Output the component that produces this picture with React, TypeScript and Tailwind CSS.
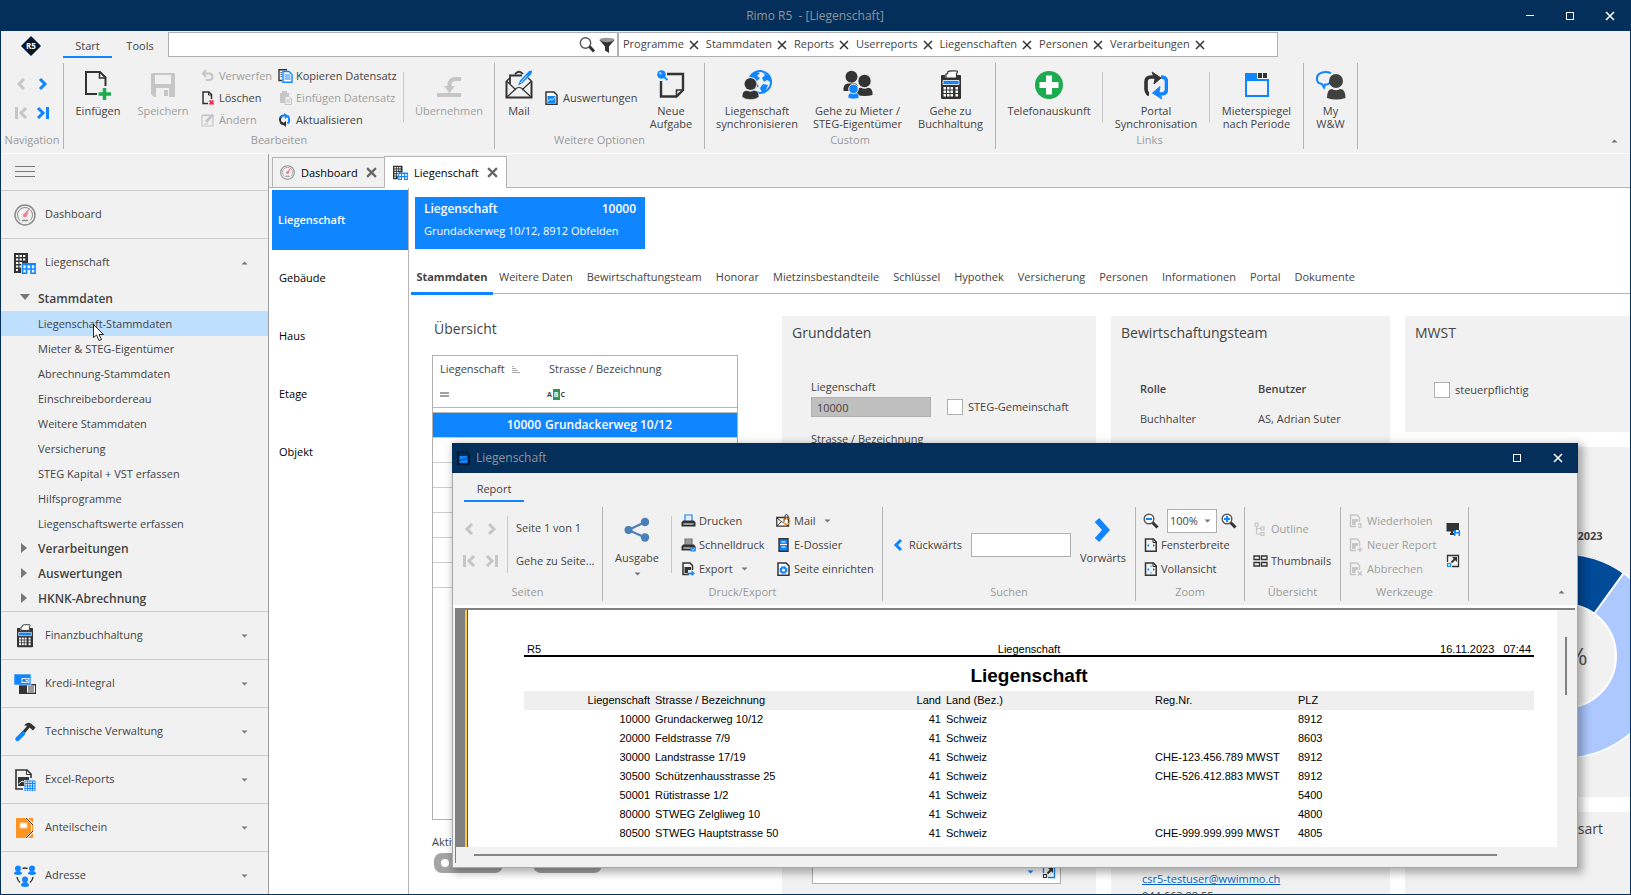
import { useState } from 'react';
import type { ReactNode } from 'react';

// ---------- Icons ----------

const DARK = '#333333';
const BLUE = '#0f85ff';
const MUTED = '#c6c6c6';

function Svg({ w, h, children }: { w: number; h: number; children: ReactNode }) {
  return (
    <svg width={w} height={h} viewBox={`0 0 ${w} ${h}`} fill="none" className="shrink-0" aria-hidden="true">
      {children}
    </svg>
  );
}

function Chevron({ dir, color, bar, big }: { dir: 'left' | 'right'; color: string; bar?: boolean; big?: boolean }) {
  if (big) {
    return (
      <Svg w={18} h={28}>
        <path d="M3 3 L12 13 L3 23" stroke={color} strokeWidth="6" />
      </Svg>
    );
  }
  return (
    <Svg w={14} h={14}>
      <g transform={dir === 'left' ? 'matrix(-1 0 0 1 14 0)' : undefined}>
        <path d={bar ? 'M2 2 L7 7 L2 12' : 'M4 2 L9 7 L4 12'} stroke={color} strokeWidth="3" />
        {bar && <path d="M11.5 1 V13" stroke={color} strokeWidth="3" />}
      </g>
    </Svg>
  );
}

function Caret({ up, color = '#777777' }: { up?: boolean; color?: string }) {
  return (
    <Svg w={7} h={4}>
      <path d={up ? 'M0.5 3.5 L3.5 0.5 L6.5 3.5 Z' : 'M0.5 0.5 L6.5 0.5 L3.5 3.5 Z'} fill={color} />
    </Svg>
  );
}

function CloseIcon({ size = 10, color = DARK, width = 1.4 }: { size?: number; color?: string; width?: number }) {
  return (
    <svg width={size} height={size} viewBox="0 0 10 10" className="shrink-0" aria-hidden="true">
      <path d="M1 1 L9 9 M9 1 L1 9" stroke={color} strokeWidth={width} />
    </svg>
  );
}

const LogoIcon = () => (
  <Svg w={20} h={20}>
    <path d="M10 1 L19 10 L10 19 L1 10 Z" fill="#03182f" stroke="#03182f" strokeWidth="1.5" strokeLinejoin="round" />
    <text x="10" y="13" textAnchor="middle" fontFamily="Open Sans, sans-serif" fontWeight="700" fontSize="8" fill="#fff">R5</text>
  </Svg>
);

const NewDocIcon = () => (
  <Svg w={28} h={30}>
    <path d="M13 24 H2 V2 H16 L21.500 7.500 V16" stroke={DARK} strokeWidth="2" />
    <path d="M15.500 2 V8 H21.500" stroke={DARK} strokeWidth="1.500" />
    <path d="M20.500 18 V30 M14.500 24 H27" stroke="#1dab50" strokeWidth="3.500" />
  </Svg>
);

const SaveIcon = () => (
  <Svg w={24} h={30}>
    <path d="M1 3 H23 Q24 3 24 4 V26 Q24 27 23 27 H3 L0 24 V4 Q0 3 1 3 Z" fill={MUTED} />
    <path d="M4 5 H20 V14 H4 Z M5 18 H18 V27 H5 Z" fill="#f1f1f1" />
    <path d="M4 3 H20 V5 H4 Z M13 20 H17 V26 H13 Z" fill={MUTED} />
  </Svg>
);

const UndoIcon = () => (
  <Svg w={14} h={14}>
    <path d="M5 1 L2 4.500 L5 8 M2 4.500 H8.500 Q11.500 4.500 11.500 8 Q11.500 11 8 11 H5" stroke={MUTED} strokeWidth="2" />
  </Svg>
);

const DeleteIcon = () => (
  <Svg w={14} h={14}>
    <path d="M7 12.500 H2 V1 H8 L10.500 3.500 V8" stroke={DARK} strokeWidth="1.500" />
    <path d="M7.500 1 V4 H10.500" stroke={DARK} />
    <path d="M8.500 9.500 L12.500 13.500 M12.500 9.500 L8.500 13.500" stroke="#ee3344" strokeWidth="1.800" />
  </Svg>
);

const EditIcon = () => (
  <Svg w={14} h={14}>
    <path d="M1 2.500 H12 V13 H1 Z" stroke={MUTED} strokeWidth="1.200" />
    <path d="M2 1 V3 M4 1 V3 M6 1 V3 M8 1 V3 M3 11 H7" stroke={MUTED} strokeWidth="1.200" />
    <path d="M5 9 L12 1.500" stroke={MUTED} strokeWidth="3" />
  </Svg>
);

const CopyIcon = () => (
  <Svg w={15} h={14}>
    <path d="M4 11.500 H1 V0.800 H9" stroke={DARK} strokeWidth="1.400" />
    <path d="M2.500 3.500 H4 M2.500 5.500 H4 M2.500 7.500 H4" stroke={DARK} strokeWidth="0.800" />
    <path d="M5 2.500 H11 L14 5.500 V13.200 H5 Z" fill="#fff" stroke={BLUE} strokeWidth="1.400" />
    <path d="M6.500 6 H12 M6.500 8 H12.500 M6.500 10 H12.500" stroke={BLUE} />
  </Svg>
);

const PasteIcon = () => (
  <Svg w={15} h={14}>
    <path d="M2 2 H11 V12 H2 Z M4 0 H9 V3 H4 Z" fill={MUTED} />
    <path d="M7 5.500 H11 L13.500 8 V13.500 H7 Z" fill="#eee" stroke={MUTED} />
    <path d="M8.500 9 H12 M8.500 11 H12" stroke={MUTED} />
  </Svg>
);

const RefreshIcon = () => (
  <Svg w={15} h={14}>
    <path d="M4.500 2.500 Q1.800 4 2 7 Q2.200 9.500 4.500 11" stroke={DARK} strokeWidth="2" />
    <path d="M9.500 2.800 Q11.500 4.500 11.200 7.500 Q11 9.500 9.500 10.500" stroke={BLUE} strokeWidth="2" />
    <path d="M3 4.500 Q4 2 7 2.200 H8" stroke={BLUE} strokeWidth="2" />
    <path d="M6 0 L10.500 3 L7 6 Z" fill={BLUE} />
    <path d="M3 9.500 Q4.500 11.500 8 11 " stroke={DARK} strokeWidth="2.400" />
    <path d="M8 8 L4.500 11 L8 14 Z" fill={DARK} />
  </Svg>
);

const ApplyIcon = () => (
  <Svg w={24} h={30}>
    <path d="M24 9 H19 Q12.500 9 12.500 15 V19" stroke={MUTED} strokeWidth="4" />
    <path d="M7 16 L12.500 23 L18 16 Z" fill={MUTED} />
    <path d="M0 25 H24" stroke={MUTED} strokeWidth="4" />
  </Svg>
);

const MailBigIcon = () => (
  <Svg w={28} h={30}>
    <path d="M1.500 11 V27.500 H26.500 V11" stroke={DARK} strokeWidth="2" />
    <path d="M1.500 11 L11 20 M26.500 11 L17 20 M2 27 L11 18.500 Q14 16.500 17 18.500 L26 27" stroke={DARK} strokeWidth="1.200" />
    <path d="M1.500 11 L5 8 M26.500 11 L23 8" stroke={DARK} strokeWidth="1.500" />
    <path d="M5 14 V5.500 H17 M10 4 Q14 -0.500 18 4" stroke={DARK} strokeWidth="1.800" />
    <path d="M13 15.500 L15 10.500 L24 1 L27 0.500 L26.500 4 L17.500 13 Z" fill={BLUE} />
    <path d="M15.500 13 L22 5.500" stroke="#fff" strokeWidth="0.800" />
  </Svg>
);

function ReportIcon({ color = DARK, page = '#ffffff' }: { color?: string; page?: string }) {
  return (
    <Svg w={13} h={14}>
      <path d="M1 1 H9 L12 4 V13.200 H1 Z" fill={page} stroke={color} strokeWidth="1.500" />
      <path d="M2.500 5 H10.500 V12 H2.500 Z" fill={BLUE} />
      <path d="M3 10 L5.500 8 L7 9 L10.500 6" stroke={page} strokeWidth="0.900" />
    </Svg>
  );
}

const TaskIcon = () => (
  <Svg w={28} h={30}>
    <path d="M10 4 H26 V20 L19.500 26.500 H4 V11" stroke={DARK} strokeWidth="2.400" />
    <path d="M19.500 26.500 V20 H26" stroke={DARK} strokeWidth="1.600" />
    <circle cx="4.500" cy="4.500" r="4.300" fill={BLUE} />
    <path d="M6 6 L10.500 10" stroke={BLUE} strokeWidth="1.800" />
    <circle cx="3.300" cy="3.300" r="1.200" fill="#a8d0ff" />
  </Svg>
);

const GlobeUserIcon = () => (
  <Svg w={30} h={30}>
    <circle cx="18" cy="12" r="11" stroke={BLUE} strokeWidth="2" />
    <path d="M9 5 L14 2 L18 3 L15 6 L18 8 L14 12 L17 16 L12 20 L8 12 Z M20 2 L27 6 L29 12 L25 10 L22 12 L20 8 L23 5 Z M21 14 L26 15 L24 20 L20 23 L18 18 Z" fill={BLUE} />
    <circle cx="8.500" cy="14" r="7" fill="#f1f1f1" />
    <circle cx="8.500" cy="14" r="6" fill={DARK} />
    <path d="M0 27 Q0 20 5 20.500 Q8.500 22 12 20.500 Q17 20 17 27 Q13 30 8.500 29.500 Q4 30 0 27 Z" fill={DARK} stroke="#f1f1f1" strokeWidth="0.600" />
  </Svg>
);

const PeopleIcon = () => (
  <Svg w={30} h={30}>
    <circle cx="8.500" cy="6.800" r="6" fill={DARK} />
    <path d="M0.500 21 Q0 13.500 5 13.500 H13 Q15 14 14.500 21 Z" fill={DARK} />
    <circle cx="21.500" cy="11" r="6.700" fill={DARK} stroke="#f1f1f1" />
    <path d="M14 25 Q13.500 17.500 18 17.800 Q21.500 19.500 25 17.800 Q30 18 29.500 25 Q22 27 14 25 Z" fill={DARK} />
    <circle cx="10.500" cy="19" r="4.800" fill={BLUE} stroke="#f1f1f1" />
    <path d="M5 28 Q5 23 8 23 Q10.500 25 13 23 Q16 23 16 28 Q10.500 30 5 28 Z" fill={BLUE} stroke="#f1f1f1" strokeWidth="0.600" />
  </Svg>
);

function CalcIcon({ w = 22, h = 30 }: { w?: number; h?: number }) {
  return (
    <svg width={w} height={h} viewBox="0 0 22 30" fill="none" className="shrink-0" aria-hidden="true">
      <path d="M6 8 V4 Q8 4 8 1.500 Q9 0.500 17 1 Q18 2 16.500 3.500 V8 Z" fill="#fff" stroke={DARK} strokeWidth="1.200" />
      <path d="M2 5 H5 V8 H17 V5 H20 Q21 5 21 6 V28 Q21 29 20 29 H2 Q1 29 1 28 V6 Q1 5 2 5 Z" fill={DARK} />
      <path d="M3 10.500 H19 V14.500 H3 Z" fill={BLUE} stroke="#fff" strokeWidth="0.800" />
      {[17, 20.5, 24].map((y) =>
        [3.5, 7, 10.500, 15.500].map((x) => <rect key={`${x}-${y}`} x={x} y={y} width="2.500" height="2.500" fill="#fff" />)
      )}
    </svg>
  );
}

const PlusCircleIcon = () => (
  <Svg w={28} h={30}>
    <circle cx="14" cy="15" r="14" fill="#1dab50" />
    <path d="M14 5.500 V24.500 M4.500 15 H23.500" stroke="#fff" strokeWidth="6" />
  </Svg>
);

const SyncIcon = () => (
  <Svg w={24} h={30}>
    <path d="M5 24 H4 Q2 22 2 19 V12 Q2 7 7 7 H11" stroke={DARK} strokeWidth="3.600" />
    <path d="M8 2 L17 8 L10 14 L11 9 Z" fill={DARK} stroke={DARK} />
    <path d="M17 7 Q22.500 7 22.500 12 V19 Q22.500 24 17 24 H14" stroke={BLUE} strokeWidth="3.600" />
    <path d="M18 29 L8.500 23 L16 16.500 L15 22 Z" fill={BLUE} stroke={BLUE} />
  </Svg>
);

const FolderTabsIcon = () => (
  <Svg w={24} h={30}>
    <path d="M1 26 V4 H11 V10 H23 V26 Z" fill="#f4f4f4" stroke={BLUE} strokeWidth="2" />
    <path d="M0 4 Q0 3 1 3 H11 V11 H0 Z" fill={BLUE} />
    <path d="M0 9 H24 V11 H0 Z" fill={BLUE} />
    <path d="M13 3 H17 V8 H13 Z M18 3 H22 V8 H18 Z" fill={DARK} />
  </Svg>
);

const ChatUserIcon = () => (
  <Svg w={30} h={30}>
    <path d="M15 3 Q8 0.500 3 4 Q-1 8 2.500 13 L6 14 L8 17.500 L9 14.500 Q13 15 14 12" stroke={BLUE} strokeWidth="2" />
    <circle cx="20" cy="11" r="7" fill="#404040" />
    <path d="M11 28 Q11 19 16 19 Q20 21.500 24 19 Q29.500 19 29.500 28 Q20 31 11 28 Z" fill="#404040" />
  </Svg>
);

const GaugeIcon = ({ size = 22 }: { size?: number }) => (
  <svg width={size} height={size} viewBox="0 0 22 22" fill="none" className="shrink-0" aria-hidden="true">
    <circle cx="11" cy="11" r="10" stroke="#8c8c8c" strokeWidth="1.500" />
    <circle cx="11" cy="11" r="7.500" stroke="#8c8c8c" strokeWidth="1" strokeDasharray="36 11" strokeDashoffset="-17" />
    <path d="M15.500 4 L13 12 Q11 14.500 9 12 Q8.500 10 11 9 Z" fill="#ee7d90" />
    <path d="M8 16.500 H14" stroke="#8c8c8c" strokeWidth="1.500" />
  </svg>
);

const BuildingIcon = ({ size = 22 }: { size?: number }) => (
  <svg width={size} height={size} viewBox="0 0 22 22" fill="none" className="shrink-0" aria-hidden="true">
    <path d="M0 1 H14 V11 H7 V21 H0 Z" fill={DARK} />
    {[3, 6.5, 10, 13.500].map((y) =>
      [2, 5.500, 9].map((x) => (x > 7 && y > 9 ? null : <rect key={`${x}-${y}`} x={x} y={y} width="2.300" height="2" fill="#fff" />))
    )}
    <path d="M2 17 H4 V19 H2 Z" fill="#fff" />
    <path d="M8.500 12.500 H21 V22 M8.500 12 V22 M8 17 H21.500 M12.500 12 V22 M17 12 V22" stroke={BLUE} strokeWidth="1.600" />
    <path d="M8 11 H22 V13 H8 Z M8 20.500 H12 V22 H8 Z M17 20.500 H22 V22 H17 Z" fill={BLUE} />
  </svg>
);

const CreditIcon = () => (
  <Svg w={22} h={22}>
    <path d="M5 11 H22 V21 H5 Z" fill={DARK} />
    <path d="M13 12.500 H21 V19.500 H13 Z" fill="#fff" />
    <path d="M14 14 H20 M14 16 H20 M14 18 H20" stroke={DARK} />
    <path d="M0 1 H17 V12 H0 Z" fill={BLUE} stroke="#f1f1f1" strokeWidth="0.600" />
    <path d="M7.500 5 H15.500 V10 H7.500 Z" fill="#fff" />
    <circle cx="10" cy="7.500" r="1.800" fill={BLUE} />
    <circle cx="13" cy="7.500" r="1.500" stroke={BLUE} />
  </Svg>
);

const HammerIcon = () => (
  <Svg w={22} h={22}>
    <path d="M9 12 L15 5" stroke={DARK} strokeWidth="3" />
    <path d="M10 4.500 Q13 0.500 17 2.500 L21.500 6.500 L19 9.500 L15 6 Q13 4 10 4.500 Z" fill={DARK} />
    <path d="M3.500 18 L9 12.500" stroke={BLUE} strokeWidth="4.500" strokeLinecap="round" />
  </Svg>
);

const ExcelIcon = () => (
  <Svg w={22} h={22}>
    <path d="M9 20 H2 V1 H13 L17 5 V9" stroke={DARK} strokeWidth="1.600" />
    <path d="M12.500 1 V5.500 H17" stroke={DARK} />
    <path d="M4 8 H15 V11 H10 V17 H4 Z" fill={DARK} />
    <path d="M4.500 15 L8 12 L10 13" stroke="#fff" />
    <path d="M11 12 H21 V22 H11 Z" fill="#fff" stroke={BLUE} />
    <path d="M11 14.500 H21 M11 17 H21 M11 19.500 H21 M13.500 12 V22 M16 12 V22 M18.500 12 V22" stroke={BLUE} />
  </Svg>
);

const CertificateIcon = () => (
  <Svg w={22} h={22}>
    <path d="M2 1 H11 L17 7 V15 L11 21 H2 Z" fill="#ff9423" />
    <path d="M14 1 H19 V6 Z M14 21 H19 V16 Z M18 8 H19 V14 H18 Z" fill="#ff9423" />
    <path d="M12 1 L19 8 M12 21 L19 14" stroke={DARK} strokeWidth="1" />
    <path d="M6 6 H13 V11 H6 Z" fill="#fff" stroke="#ffd09a" />
  </Svg>
);

const NetworkIcon = () => (
  <Svg w={22} h={22}>
    <circle cx="4" cy="3.500" r="3" fill={BLUE} />
    <path d="M0 9 Q0 6 4 6 Q8 6 8 9 Q4 11 0 9 Z" fill={BLUE} />
    <circle cx="18" cy="3.500" r="3" fill={BLUE} />
    <path d="M14 9 Q14 6 18 6 Q22 6 22 9 Q18 11 14 9 Z" fill={BLUE} />
    <circle cx="11" cy="14.500" r="3" fill={BLUE} />
    <path d="M7 21 Q7 17 11 17 Q15 17 15 21 Q11 23 7 21 Z" fill={BLUE} />
    <path d="M8.500 3.500 Q11 2.500 13.500 3.500 M3 12 Q3.500 15.500 6 17.500 M19 12 Q18.500 15.500 16 17.500" stroke={DARK} strokeWidth="1.400" />
  </Svg>
);

const ShareIcon = () => (
  <Svg w={26} h={30}>
    <path d="M4.500 13 L21 5 M4.500 13 L21 20.500" stroke="#4a7fb8" strokeWidth="2" />
    <circle cx="4.500" cy="13" r="4" fill="#4a7fb8" />
    <circle cx="21" cy="5" r="4.200" fill="#4a7fb8" />
    <circle cx="21" cy="20.500" r="4.200" fill="#4a7fb8" />
  </Svg>
);

function PrinterIcon({ quick }: { quick?: boolean }) {
  return (
    <Svg w={15} h={14}>
      <path d="M4 7 V1 H11 V7" fill={quick ? '#999' : '#e4f0ff'} stroke={quick ? '#777' : BLUE} strokeWidth="1.200" />
      <path d="M2 6.500 H13 L14.500 8.500 V12.500 H0.500 V8.500 Z" fill={DARK} />
      <path d="M2.500 10 H12.500" stroke="#fff" />
      {quick && <path d="M9.500 9 H14.500 V13.500 H9.500 Z" fill={BLUE} />}
      {quick && <path d="M10.500 11 L12 12.300 L13.500 10.500" stroke="#fff" strokeWidth="0.800" />}
    </Svg>
  );
}

const ExportIcon = () => (
  <Svg w={15} h={14}>
    <path d="M8 12.500 H2 V1 H9 L11.500 3.500 V8" stroke={DARK} strokeWidth="1.500" />
    <path d="M3.500 5 H10 V8 H7 V11 H3.500 Z" fill={DARK} />
    <path d="M6.500 11.500 H11" stroke={BLUE} strokeWidth="1.800" />
    <path d="M10.500 8.500 L14 11.500 L10.500 14 Z" fill={BLUE} />
  </Svg>
);

const MailSmallIcon = () => (
  <Svg w={15} h={14}>
    <path d="M0.800 3.500 H12.500 V12.200 H0.800 Z" fill="#fff" stroke={DARK} strokeWidth="1.300" />
    <path d="M1 4 L6.500 8.500 L9 6.500 M1 12 L5 8 M12 12 L9 9.500" stroke={DARK} />
    <circle cx="10.500" cy="7" r="3.200" stroke="#ff9423" strokeWidth="1.300" />
    <path d="M9 6 V1.500 Q10.500 -0.500 12 1.500 V6" stroke={DARK} />
  </Svg>
);

const DossierIcon = () => (
  <Svg w={15} h={14}>
    <path d="M3 0.800 H12 V13.200 H3 Z" fill={BLUE} stroke={DARK} strokeWidth="1.400" />
    <path d="M5.500 4 H9.500 M5.500 9 H9.500 M4 6.500 H11" stroke="#fff" strokeWidth="1.200" />
  </Svg>
);

const PageSetupIcon = () => (
  <Svg w={15} h={14}>
    <path d="M2 1 H10 L13 4 V13.200 H2 Z" fill="#fff" stroke={DARK} strokeWidth="1.500" />
    <circle cx="7.500" cy="8" r="2.600" stroke={BLUE} strokeWidth="2" />
    <circle cx="7.500" cy="8" r="3.800" stroke={BLUE} strokeWidth="0.800" strokeDasharray="1.500 1.500" />
  </Svg>
);

function PageFitIcon({ full }: { full?: boolean }) {
  return (
    <Svg w={14} h={14}>
      <path d="M2.500 1 H10.500 L13.200 4 V13.200 H2.500 Z" stroke={DARK} strokeWidth="1.500" />
      <path d="M10 1 V4.500 H13" stroke={DARK} />
      <path d="M6 6 L4 7.500 L6 9 Z M10 6 L12 7.500 L10 9 Z" fill={BLUE} />
      {full && <path d="M7 4.500 L8 3.200 L9 4.500 Z M7 10.500 L8 11.800 L9 10.500 Z" fill={BLUE} />}
    </Svg>
  );
}

function ZoomIcon({ plus }: { plus?: boolean }) {
  return (
    <Svg w={16} h={16}>
      <path d="M9.500 9.500 L14.500 14.500" stroke={DARK} strokeWidth="3" />
      <circle cx="6" cy="6" r="4.800" fill="#fff" stroke="#555" strokeWidth="1.400" />
      <path d={plus ? 'M3 6 H9 M6 3 V9' : 'M3 6 H9'} stroke={BLUE} strokeWidth="2" />
    </Svg>
  );
}

const OutlineIcon = () => (
  <Svg w={15} h={14}>
    <path d="M2 1 H5 V4 H2 Z M8 5 H11 V8 H8 Z M8 10.500 H11 V13.500 H8 Z M3.500 4 V12 H8 M3.500 6.500 H8" stroke={MUTED} strokeWidth="1.200" />
  </Svg>
);

const ThumbsIcon = () => (
  <Svg w={15} h={14}>
    <path d="M1 2 H6.500 V5.500 H1 Z M8.500 2 H14 V5.500 H8.500 Z M1 8.500 H6.500 V12 H1 Z M8.500 8.500 H14 V12 H8.500 Z" stroke={DARK} strokeWidth="1.300" />
  </Svg>
);

function MutedReportIcon({ mark }: { mark: string }) {
  return (
    <Svg w={14} h={14}>
      <path d="M7 12.500 H1.500 V1 H8 L10.500 3.500 V8" stroke={MUTED} strokeWidth="1.400" />
      <path d="M3 5 H9 V8 H6.500 V11 H3 Z" fill={MUTED} />
      <path d={mark} stroke={MUTED} strokeWidth="1.400" />
    </Svg>
  );
}

const MonitorIcon = () => (
  <Svg w={15} h={14}>
    <path d="M0.500 1 H13 V9.500 H0.500 Z" fill={DARK} />
    <path d="M4 12 H8 M6 9 V12" stroke={DARK} strokeWidth="2" />
    <path d="M8 8 H14 V14 H8 Z" fill={BLUE} />
    <path d="M10 8 H12.500 V10 H10 Z M9.500 11.500 H12.500 V14 H9.500 Z" fill="#fff" />
  </Svg>
);

function OpenIcon({ frame = DARK, corner = BLUE }: { frame?: string; corner?: string }) {
  return (
    <Svg w={14} h={14}>
      <path d="M6 12.500 H12.500 V1.500 H1.500 V8" stroke={frame} strokeWidth="1.300" />
      <path d="M5.500 8.500 L9 5" stroke={DARK} strokeWidth="2" />
      <path d="M6 3 H11 V8 Z" fill={DARK} />
      <path d="M1.500 9.500 H4.500 V12.500 H1.500 Z" stroke={corner} strokeWidth="1.200" />
    </Svg>
  );
}

const CursorIcon = () => (
  <Svg w={12} h={18}>
    <path d="M0.500 0.500 V13.500 L3.500 11 L6 16.500 L8.500 15.500 L6 10.500 H10.500 Z" fill="#fff" stroke="#111" strokeWidth="0.900" />
  </Svg>
);

// ---------- Ribbon parts ----------

function BigButton({ icon, lines, className = '', disabled }: { icon: ReactNode; lines: string[]; className?: string; disabled?: boolean }) {
  return (
    <button
      disabled={disabled}
      className={`flex flex-col items-center text-center leading-[13px] whitespace-nowrap ${disabled ? 'text-[#9f9f9f]' : ''} ${className}`}
    >
      <span className="flex h-[30px] items-start">{icon}</span>
      <span className="mt-1">
        {lines.map((line) => (
          <span key={line} className="block">{line}</span>
        ))}
      </span>
    </button>
  );
}

function SmallButton({ icon, label, disabled, caret, tall }: { icon: ReactNode; label: string; disabled?: boolean; caret?: boolean; tall?: boolean }) {
  return (
    <button
      disabled={disabled}
      className={`flex items-center whitespace-nowrap ${tall ? 'h-6' : 'h-[22px]'} ${disabled ? 'text-[#9f9f9f]' : ''}`}
    >
      <span className="flex w-[18px] shrink-0 items-center">{icon}</span>
      <span>{label}</span>
      {caret && <span className="ml-2"><Caret /></span>}
    </button>
  );
}

function Group({ label, className, children }: { label?: string; className: string; children: ReactNode }) {
  return (
    <section className={`flex shrink-0 flex-col border-r border-[#b4b4b4] ${className}`}>
      <div className="flex min-h-0 flex-1 items-start">{children}</div>
      {label && <div className="h-[17px] text-center leading-[15px] text-[#9a9a9a]">{label}</div>}
    </section>
  );
}

const Divider = ({ className }: { className: string }) => <div className={`w-px shrink-0 bg-[#c8c8c8] ${className}`} />;

// ---------- Data ----------

const searchTags = ['Programme', 'Stammdaten', 'Reports', 'Userreports', 'Liegenschaften', 'Personen', 'Verarbeitungen'];

const stammdatenItems = [
  'Liegenschaft-Stammdaten',
  'Mieter & STEG-Eigentümer',
  'Abrechnung-Stammdaten',
  'Einschreibebordereau',
  'Weitere Stammdaten',
  'Versicherung',
  'STEG Kapital + VST erfassen',
  'Hilfsprogramme',
  'Liegenschaftswerte erfassen',
];

const modules = [
  { label: 'Finanzbuchhaltung', icon: <CalcIcon w={22} h={24} /> },
  { label: 'Kredi-Integral', icon: <CreditIcon /> },
  { label: 'Technische Verwaltung', icon: <HammerIcon /> },
  { label: 'Excel-Reports', icon: <ExcelIcon /> },
  { label: 'Anteilschein', icon: <CertificateIcon /> },
  { label: 'Adresse', icon: <NetworkIcon /> },
];

const levels = ['Gebäude', 'Haus', 'Etage', 'Objekt'];

const detailTabs = [
  'Weitere Daten', 'Bewirtschaftungsteam', 'Honorar', 'Mietzinsbestandteile', 'Schlüssel', 'Hypothek',
  'Versicherung', 'Personen', 'Informationen', 'Portal', 'Dokumente',
];

const reportRows = [
  ['10000', 'Grundackerweg 10/12', '41', 'Schweiz', '', '8912'],
  ['20000', 'Feldstrasse 7/9', '41', 'Schweiz', '', '8603'],
  ['30000', 'Landstrasse 17/19', '41', 'Schweiz', 'CHE-123.456.789 MWST', '8912'],
  ['30500', 'Schützenhausstrasse 25', '41', 'Schweiz', 'CHE-526.412.883 MWST', '8912'],
  ['50001', 'Rütistrasse 1/2', '41', 'Schweiz', '', '5400'],
  ['80000', 'STWEG Zelgliweg 10', '41', 'Schweiz', '', '4800'],
  ['80500', 'STWEG Hauptstrasse 50', '41', 'Schweiz', 'CHE-999.999.999 MWST', '4805'],
];

// ---------- Main window ----------

function TitleBar() {
  return (
    <header className="flex h-[31px] shrink-0 items-center bg-[#042f5a] text-[12px] text-[#8e959c]">
      <div className="flex-1" />
      <h1 className="whitespace-pre">Rimo R5  - [Liegenschaft]</h1>
      <div className="flex flex-1 justify-end pr-px">
        <button aria-label="Minimieren" className="flex h-[31px] w-10 items-center justify-center">
          <span className="h-px w-2 bg-white" />
        </button>
        <button aria-label="Maximieren" className="flex h-[31px] w-10 items-center justify-center">
          <span className="h-2 w-2 border border-white" />
        </button>
        <button aria-label="Schliessen" className="flex h-[31px] w-10 items-center justify-center">
          <CloseIcon color="#ffffff" width={1.6} />
        </button>
      </div>
    </header>
  );
}

function Ribbon() {
  return (
    <div className="shrink-0 border-b border-white bg-[#f1f1f1]">
      <div className="flex h-[27px] items-start">
        <div className="flex w-[62px] shrink-0 justify-center pt-[5px] pr-[2px]"><LogoIcon /></div>
        <button className="h-[27px] w-[49px] border-b-2 border-[#0f85ff] pt-[5px]">Start</button>
        <button className="h-[27px] w-14 shrink-0 pt-1">Tools</button>
        <div className="mt-px flex h-[25px] w-[450px] shrink-0 items-center border border-[#b0b0b0] bg-white pr-[2px]">
          <input aria-label="Suche" className="h-full min-w-0 flex-1 px-2 outline-none" />
          <Svg w={36} h={18}>
            <circle cx="6.500" cy="7" r="5.200" stroke="#555" strokeWidth="1.400" />
            <path d="M10.500 10.500 L15 15.500" stroke={DARK} strokeWidth="3" />
            <ellipse cx="28" cy="4" rx="7.500" ry="2.300" fill="#999" />
            <path d="M20.500 4 Q28 8.500 35.500 4 L30 10.500 V17 L26 14.500 V10.500 Z" fill={DARK} />
          </Svg>
        </div>
        <div className="mt-px flex h-[25px] w-[660px] items-center gap-[7px] border border-[#b0b0b0] bg-white pl-1">
          {searchTags.map((tag) => (
            <span key={tag} className="flex items-center gap-[5px]">
              {tag}
              <button aria-label={`${tag} entfernen`}><CloseIcon width={1.5} /></button>
            </span>
          ))}
        </div>
      </div>

      <div className="flex h-[95px] items-start pt-[5px]">
        <Group label="Navigation" className="h-[86px] w-[63px]">
          <div className="grid w-full grid-cols-[22px_22px] justify-center gap-y-[15px] pt-[14px]">
            <button aria-label="Zurück" className="flex justify-center"><Chevron dir="left" color={MUTED} /></button>
            <button aria-label="Weiter" className="flex justify-center"><Chevron dir="right" color={BLUE} /></button>
            <button aria-label="Anfang" className="flex justify-center"><Chevron dir="left" color={MUTED} bar /></button>
            <button aria-label="Ende" className="flex justify-center"><Chevron dir="right" color={BLUE} bar /></button>
          </div>
        </Group>

        <Group label="Bearbeiten" className="h-[86px] w-[431px]">
          <BigButton icon={<NewDocIcon />} lines={['Einfügen']} className="ml-2 w-[52px] pt-[7px]" />
          <BigButton icon={<SaveIcon />} lines={['Speichern']} className="ml-[11px] w-14 pt-[7px]" disabled />
          <div className="ml-[10px] w-[77px] pt-[2px]">
            <SmallButton icon={<UndoIcon />} label="Verwerfen" disabled />
            <SmallButton icon={<DeleteIcon />} label="Löschen" />
            <SmallButton icon={<EditIcon />} label="Ändern" disabled />
          </div>
          <div className="w-[125px] pt-[2px]">
            <SmallButton icon={<CopyIcon />} label="Kopieren Datensatz" />
            <SmallButton icon={<PasteIcon />} label="Einfügen Datensatz" disabled />
            <SmallButton icon={<RefreshIcon />} label="Aktualisieren" />
          </div>
          <Divider className="mt-[9px] h-[50px]" />
          <BigButton icon={<ApplyIcon />} lines={['Übernehmen']} className="flex-1 pt-[7px]" disabled />
        </Group>

        <Group label="Weitere Optionen" className="h-[86px] w-[210px]">
          <BigButton icon={<MailBigIcon />} lines={['Mail']} className="w-12 pt-[7px]" />
          <div className="w-[95px] pt-6 pl-[2px]">
            <SmallButton icon={<ReportIcon />} label="Auswertungen" />
          </div>
          <BigButton icon={<TaskIcon />} lines={['Neue', 'Aufgabe']} className="flex-1 pt-[7px]" />
        </Group>

        <Group label="Custom" className="h-[86px] w-[291px]">
          <BigButton icon={<GlobeUserIcon />} lines={['Liegenschaft', 'synchronisieren']} className="w-[104px] pt-[7px]" />
          <BigButton icon={<PeopleIcon />} lines={['Gehe zu Mieter /', 'STEG-Eigentümer']} className="w-[97px] pt-[7px]" />
          <BigButton icon={<CalcIcon />} lines={['Gehe zu', 'Buchhaltung']} className="flex-1 pt-[7px]" />
        </Group>

        <Group label="Links" className="h-[86px] w-[308px]">
          <BigButton icon={<PlusCircleIcon />} lines={['Telefonauskunft']} className="w-[106px] pt-[7px]" />
          <Divider className="mt-[9px] h-[50px]" />
          <BigButton icon={<SyncIcon />} lines={['Portal', 'Synchronisation']} className="w-[106px] pt-[7px]" />
          <Divider className="mt-[9px] h-[50px]" />
          <BigButton icon={<FolderTabsIcon />} lines={['Mieterspiegel', 'nach Periode']} className="flex-1 pt-[7px]" />
        </Group>

        <Group className="h-[86px] w-[54px]">
          <BigButton icon={<ChatUserIcon />} lines={['My', 'W&W']} className="flex-1 pt-[7px]" />
        </Group>

        <button aria-label="Menüband einklappen" className="mt-[76px] mr-3 ml-auto"><Caret up /></button>
      </div>
    </div>
  );
}

function Sidebar() {
  const [active, setActive] = useState(stammdatenItems[0]);
  const line = 'border-b border-[#cccccc]';

  return (
    <nav className="w-[268px] shrink-0 overflow-hidden border-r border-[#a0a0a0] bg-[#f1f1f1]">
      <div className={`flex h-[37px] items-center pl-[14px] ${line}`}>
        <button aria-label="Menü" className="flex w-5 flex-col gap-1 pb-[2px]">
          <span className="h-px bg-[#777777]" />
          <span className="h-px bg-[#777777]" />
          <span className="h-px bg-[#777777]" />
        </button>
      </div>
      <button className={`flex h-12 w-full items-center gap-[9px] pl-[13px] ${line}`}>
        <GaugeIcon />
        Dashboard
      </button>
      <button className="flex h-[47px] w-full items-center gap-[9px] pr-5 pl-[13px]">
        <BuildingIcon />
        <span className="flex-1 text-left">Liegenschaft</span>
        <Caret up />
      </button>
      <button className="flex h-[25px] w-full items-center pl-[19px] text-[12px] font-semibold">
        <span className="w-[18px]"><Svg w={10} h={10}><path d="M0 0 H10 L5 6 Z" fill="#777" /></Svg></span>
        Stammdaten
      </button>
      <ul>
        {stammdatenItems.map((item) => (
          <li key={item}>
            <a
              href="#"
              onClick={() => setActive(item)}
              className={`relative block h-[25px] pl-[37px] leading-[25px] ${active === item ? 'bg-[#bfdfff]' : ''}`}
            >
              {item}
              {active === item && <span className="absolute top-[13px] left-[92px]"><CursorIcon /></span>}
            </a>
          </li>
        ))}
      </ul>
      <div className={`h-[76px] ${line}`}>
        {['Verarbeitungen', 'Auswertungen', 'HKNK-Abrechnung'].map((item) => (
          <button key={item} className="flex h-[25px] w-full items-center pl-5 text-[12px] font-semibold">
            <span className="w-[17px]"><Svg w={6} h={12}><path d="M0 0 L6 5 L0 10 Z" fill="#777" /></Svg></span>
            {item}
          </button>
        ))}
      </div>
      {modules.map(({ label, icon }) => (
        <button key={label} className={`flex h-12 w-full items-center gap-[9px] pr-5 pl-[13px] ${line}`}>
          {icon}
          <span className="flex-1 text-left">{label}</span>
          <Caret />
        </button>
      ))}
    </nav>
  );
}

function DocumentTabs() {
  return (
    <div className="flex h-[34px] shrink-0 items-end bg-[#f1f1f1] text-black">
      <div className="h-px w-[3px] bg-[#b4b4b4]" />
      <div className="flex h-[31px] w-[112px] items-center border border-r-0 border-[#b4b4b4] pl-[7px]">
        <GaugeIcon size={15} />
        <button className="ml-[6px] pt-px">Dashboard</button>
        <button aria-label="Dashboard schliessen" className="ml-2"><CloseIcon size={11} color="#666" width={2} /></button>
      </div>
      <div className="flex h-8 w-[123px] items-center border-x border-t border-[#b4b4b4] bg-white pl-2">
        <BuildingIcon size={15} />
        <button className="ml-[6px] pt-px">Liegenschaft</button>
        <button aria-label="Liegenschaft schliessen" className="ml-2"><CloseIcon size={11} color="#666" width={2} /></button>
      </div>
      <div className="h-px flex-1 bg-[#b4b4b4]" />
    </div>
  );
}

function LevelNav() {
  return (
    <nav className="w-[140px] shrink-0 border-r border-[#b4b4b4] pt-[2px] pl-[3px] text-black">
      <button className="block h-[60px] w-full bg-[#0f85ff] pl-[6px] text-left font-semibold text-white">Liegenschaft</button>
      {levels.map((level) => (
        <button key={level} className="block h-[58px] w-full pb-[2px] pl-[7px] text-left">{level}</button>
      ))}
    </nav>
  );
}

function Overview() {
  return (
    <section className="w-[306px] shrink-0">
      <h2 className="pt-[3px] pl-[2px] text-[14px] leading-5">Übersicht</h2>
      <div className="mt-4 h-[465px] border border-[#b0b0b0]">
        <table className="w-full table-fixed border-separate border-spacing-0">
          <colgroup>
            <col className="w-[108px]" />
            <col />
          </colgroup>
          <thead>
            <tr className="h-[26px] text-left">
              <th className="pl-[7px] font-normal">
                <span className="flex items-center gap-[7px]">
                  Liegenschaft
                  <Svg w={9} h={8}>
                    <path d="M0 1.500 H2 M0 3.500 H4 M0 5.500 H6 M0 7.500 H8" stroke="#aaa" />
                  </Svg>
                </span>
              </th>
              <th className="pl-2 font-normal">Strasse / Bezeichnung</th>
            </tr>
            <tr className="h-[25px]">
              <td className="pl-[7px]">
                <Svg w={9} h={5}><path d="M0 1 H9 M0 4 H9" stroke="#444" /></Svg>
              </td>
              <td className="pl-[6px]">
                <span className="flex items-center text-[7px] leading-[11px] font-bold">
                  A<span className="mx-px bg-[#2f9656] px-px text-white">B</span>C
                </span>
              </td>
            </tr>
          </thead>
          <tbody>
            <tr>
              <td colSpan={2} className="h-[6px] border-y border-[#b8b8b8] p-0" />
            </tr>
            <tr className="bg-[#0f85ff] text-[12px] font-semibold text-white">
              <td className="h-[25px] border-b border-[#cccccc] text-right">10000</td>
              <td className="border-b border-[#cccccc] pl-1">Grundackerweg 10/12</td>
            </tr>
            {[1, 2, 3, 4, 5, 6].map((row) => (
              <tr key={row}>
                <td className="h-[25px] border-b border-[#cccccc]" />
                <td className="border-b border-[#cccccc]" />
              </tr>
            ))}
          </tbody>
        </table>
      </div>
      <div className="flex gap-[30px] pt-[13px] leading-[18px]">
        <label className="flex w-[71px] flex-col gap-[2px]">
          Aktiv
          <input
            type="checkbox"
            className="ml-[2px] h-5 w-[69px] appearance-none rounded-lg bg-[#a4a4a4] before:mt-[6px] before:ml-[7px] before:block before:h-2 before:w-2 before:rounded-full before:bg-white"
          />
        </label>
        <label className="flex w-[69px] flex-col gap-[2px]">
          Alle
          <input type="checkbox" className="h-5 w-[69px] appearance-none rounded-lg bg-[#a4a4a4]" />
        </label>
      </div>
    </section>
  );
}

function Check({ label }: { label: string }) {
  return (
    <label className="flex items-center gap-[5px] whitespace-nowrap">
      <input type="checkbox" className="h-4 w-4 appearance-none border border-[#b0b0b0] bg-white" />
      {label}
    </label>
  );
}

function Panels() {
  const panel = 'bg-[#f1f1f1]';
  const title = 'px-[10px] pt-[7px] text-[14px] leading-5';

  return (
    <div className="flex min-w-0 flex-1 gap-[15px]">
      <section className={`flex w-[314px] shrink-0 flex-col ${panel}`}>
        <h2 className={title}>Grunddaten</h2>
        <div className="flex items-end gap-4 pt-9 pl-[29px]">
          <label className="flex flex-col leading-4">
            Liegenschaft
            <input readOnly defaultValue="10000" className="mt-[2px] h-5 w-[120px] border border-[#b0b0b0] bg-[#bfbfbf] px-[5px]" />
          </label>
          <div className="pb-[2px]"><Check label="STEG-Gemeinschaft" /></div>
        </div>
        <div className="mt-[14px] pl-[29px] leading-4">Strasse / Bezeichnung</div>
        <div className="mt-auto mb-[10px] ml-[30px] flex h-6 w-[249px] items-center gap-2 border border-[#b0b0b0] bg-white pr-1">
          <input aria-label="Verwaltung" className="h-full min-w-0 flex-1 outline-none" />
          <Caret color={BLUE} />
          <button aria-label="Öffnen"><OpenIcon frame={BLUE} corner={DARK} /></button>
        </div>
      </section>

      <section className={`flex w-[279px] shrink-0 flex-col ${panel}`}>
        <h2 className={title}>Bewirtschaftungsteam</h2>
        <table className="mt-[31px] ml-[29px] w-[240px] table-fixed text-left">
          <thead>
            <tr>
              <th className="h-[30px] w-[118px] font-semibold">Rolle</th>
              <th className="font-semibold">Benutzer</th>
            </tr>
          </thead>
          <tbody>
            <tr>
              <td className="h-[30px]">Buchhalter</td>
              <td>AS, Adrian Suter</td>
            </tr>
          </tbody>
        </table>
        <div className="mt-auto -mb-[10px] pl-[31px] leading-[17px]">
          <a href="mailto:csr5-testuser@wwimmo.ch" className="text-[#0563c1] underline">csr5-testuser@wwimmo.ch</a>
          <div>044 663 88 55</div>
        </div>
      </section>

      <div className="flex min-w-0 flex-1 flex-col gap-[15px]">
        <section className={`h-[116px] shrink-0 ${panel}`}>
          <h2 className={title}>MWST</h2>
          <div className="pt-[39px] pl-[29px]"><Check label="steuerpflichtig" /></div>
        </section>
        <section className={`h-[350px] shrink-0 overflow-hidden pt-[81px] pl-[56px] ${panel}`}>
          <div className="w-[200px] text-center leading-4 font-bold">Leerstand 2023</div>
          <svg width="206" height="206" viewBox="-103 -103 206 206" className="mt-[9px] max-w-none" aria-hidden="true">
            <circle r="77" fill="none" stroke="#adc8ff" strokeWidth="50" />
            <path d="M-59.800 -83.200 A102.500 102.500 0 0 1 59.800 -83.200 L30.600 -42.600 A52.500 52.500 0 0 0 -30.600 -42.600 Z" fill="#004a98" />
            <path d="M59.800 -83.200 L30 -42 M-59.800 -83.200 L-30 -42" stroke="#fff" strokeWidth="2" />
            <circle r="102" fill="none" stroke="#fff" strokeWidth="1.500" />
            <circle r="52" fill="none" stroke="#fff" strokeWidth="2" />
            <text y="9" textAnchor="middle" fontSize="24" fill="#555">80%</text>
          </svg>
        </section>
        <section className={`flex-1 ${panel}`}>
          <h2 className="pt-[7px] pr-[27px] text-right text-[14px] leading-5">Nutzungsart</h2>
        </section>
      </div>
    </div>
  );
}

// ---------- Report dialog ----------

function ReportRibbon() {
  return (
    <div className="border-b-[3px] border-white">
      <div className="flex h-[29px] pl-[11px]">
        <button className="w-[60px] border-b-2 border-[#0f85ff] pt-[5px]">Report</button>
      </div>
      <div className="flex h-[103px] items-start pt-[5px]">
        <Group label="Seiten" className="h-[94px] w-[150px]">
          <div className="grid grid-cols-[23px_23px] gap-y-[18px] pt-[15px] pl-[4px]">
            <button aria-label="Vorherige Seite" className="flex justify-center"><Chevron dir="left" color={MUTED} /></button>
            <button aria-label="Nächste Seite" className="flex justify-center"><Chevron dir="right" color={MUTED} /></button>
            <button aria-label="Erste Seite" className="flex justify-center"><Chevron dir="left" color={MUTED} bar /></button>
            <button aria-label="Letzte Seite" className="flex justify-center"><Chevron dir="right" color={MUTED} bar /></button>
          </div>
          <Divider className="mt-[9px] ml-1 h-[57px]" />
          <div className="flex flex-col items-start gap-4 pt-3 pl-2 leading-[17px] whitespace-nowrap">
            <span>Seite 1 von 1</span>
            <button>Gehe zu Seite...</button>
          </div>
        </Group>

        <Group label="Druck/Export" className="h-[94px] w-[280px]">
          <div className="flex w-[68px] flex-col items-center gap-2">
            <BigButton icon={<ShareIcon />} lines={['Ausgabe']} className="pt-[10px]" />
            <Caret />
          </div>
          <Divider className="mt-[9px] h-[57px]" />
          <div className="w-[95px] pt-[2px] pl-[9px]">
            <SmallButton tall icon={<PrinterIcon />} label="Drucken" />
            <SmallButton tall icon={<PrinterIcon quick />} label="Schnelldruck" />
            <SmallButton tall icon={<ExportIcon />} label="Export" caret />
          </div>
          <div className="pt-[2px] pl-[9px]">
            <SmallButton tall icon={<MailSmallIcon />} label="Mail" caret />
            <SmallButton tall icon={<DossierIcon />} label="E-Dossier" />
            <SmallButton tall icon={<PageSetupIcon />} label="Seite einrichten" />
          </div>
        </Group>

        <Group label="Suchen" className="h-[94px] w-[253px]">
          <button className="mt-[26px] ml-2 flex h-6 w-[72px] items-center gap-1">
            <Chevron dir="left" color={BLUE} />
            Rückwärts
          </button>
          <input aria-label="Suchbegriff" className="mt-[26px] ml-2 h-6 w-[100px] border border-[#b0b0b0] bg-white px-1 outline-none" />
          <BigButton icon={<Chevron dir="right" color={BLUE} big />} lines={['Vorwärts']} className="flex-1 pt-[10px]" />
        </Group>

        <Group label="Zoom" className="h-[94px] w-[109px]">
          <div className="pt-[2px] pl-[7px]">
            <div className="flex h-6 items-center gap-1">
              <button aria-label="Verkleinern"><ZoomIcon /></button>
              <div className="relative ml-1">
                <select aria-label="Zoomstufe" className="block h-6 w-[50px] appearance-none border border-[#b0b0b0] bg-white pl-[2px]">
                  <option>100%</option>
                </select>
                <span className="pointer-events-none absolute top-[10px] right-[6px]"><Caret /></span>
              </div>
              <button aria-label="Vergrössern"><ZoomIcon plus /></button>
            </div>
            <SmallButton tall icon={<PageFitIcon />} label="Fensterbreite" />
            <SmallButton tall icon={<PageFitIcon full />} label="Vollansicht" />
          </div>
        </Group>

        <Group label="Übersicht" className="h-[94px] w-24">
          <div className="flex flex-col gap-2 pt-[10px] pl-2">
            <SmallButton tall icon={<OutlineIcon />} label="Outline" disabled />
            <SmallButton tall icon={<ThumbsIcon />} label="Thumbnails" />
          </div>
        </Group>

        <Group label="Werkzeuge" className="h-[94px] w-32">
          <div className="w-24 pt-[2px] pl-2">
            <SmallButton tall icon={<MutedReportIcon mark="M9 10 H12 V13 H9" />} label="Wiederholen" disabled />
            <SmallButton tall icon={<MutedReportIcon mark="M11 9 V14 M8.500 11.500 H13.500" />} label="Neuer Report" disabled />
            <SmallButton tall icon={<MutedReportIcon mark="M9 9.500 L13 13.500 M13 9.500 L9 13.500" />} label="Abbrechen" disabled />
          </div>
          <div className="flex flex-col gap-[18px] pt-[15px] pl-[9px]">
            <button aria-label="Ansicht speichern"><MonitorIcon /></button>
            <button aria-label="Ansicht öffnen"><OpenIcon /></button>
          </div>
        </Group>

        <button aria-label="Menüband einklappen" className="mt-[83px] mr-3 ml-auto"><Caret up /></button>
      </div>
    </div>
  );
}

function ReportPage() {
  const left = 'h-[19px] p-0 pl-[5px] font-normal';
  const right = 'h-[19px] p-0 text-right font-normal';

  return (
    <div className="h-[237px] flex-1 overflow-hidden border-l border-[#555555] bg-white pt-[34px] pr-[23px] pl-14 font-['Liberation_Sans',Arial,sans-serif] text-[11px] leading-[11px] text-black">
      <div className="flex border-b-2 border-black px-[3px]">
        <span className="flex-1">R5</span>
        <span>Liegenschaft</span>
        <span className="flex-1 text-right whitespace-pre">16.11.2023   07:44</span>
      </div>
      <h2 className="pt-[3px] text-center text-[19px] leading-[31px] font-bold">Liegenschaft</h2>
      <table className="w-full table-fixed border-separate border-spacing-0 text-left">
        <colgroup>
          <col className="w-[126px]" />
          <col className="w-[200px]" />
          <col className="w-[91px]" />
          <col className="w-[209px]" />
          <col className="w-[143px]" />
          <col />
        </colgroup>
        <thead className="bg-[#efefef]">
          <tr>
            <th className={right}>Liegenschaft</th>
            <th className={left}>Strasse / Bezeichnung</th>
            <th className={right}>Land</th>
            <th className={left}>Land (Bez.)</th>
            <th className={left}>Reg.Nr.</th>
            <th className={left}>PLZ</th>
          </tr>
        </thead>
        <tbody>
          {reportRows.map((row) => (
            <tr key={row[0]}>
              {row.map((cell, i) => (
                <td key={i} className={i === 0 || i === 2 ? right : left}>{cell}</td>
              ))}
            </tr>
          ))}
        </tbody>
      </table>
    </div>
  );
}

function ReportDialog() {
  return (
    <div
      role="dialog"
      aria-label="Liegenschaft"
      className="absolute top-[443px] right-[53px] left-[452px] border-x border-b border-[#a8a8a8] bg-[#f1f1f1] shadow-[3px_3px_8px_2px_rgba(0,0,0,0.3)]"
    >
      <div className="-mx-px flex h-[30px] items-center bg-[#042f5a] pl-[5px] text-[12px] text-[#8e959c]">
        <ReportIcon color="#03182f" page="#042f5a" />
        <span className="ml-[6px] flex-1">Liegenschaft</span>
        <button aria-label="Maximieren" className="flex h-[30px] w-[42px] items-center justify-center">
          <span className="h-2 w-2 border border-white" />
        </button>
        <button aria-label="Schliessen" className="flex h-[30px] w-10 items-center justify-center">
          <CloseIcon color="#ffffff" width={1.6} />
        </button>
      </div>
      <ReportRibbon />
      <div className="mx-[2px] mb-1 border-t-2 border-l border-[#808080]">
        <div className="flex">
          <div className="w-[9px] shrink-0 bg-[#808080]" />
          <div className="w-[2px] shrink-0 bg-[#ffc83d]" />
          <ReportPage />
          <div className="flex w-[18px] shrink-0 justify-center pt-[27px]">
            <div className="h-[58px] w-[2px] bg-[#808080]" />
          </div>
        </div>
        <div className="pt-[7px] pr-[78px] pb-[7px] pl-[18px]">
          <div className="h-[2px] bg-[#858585]" />
        </div>
      </div>
    </div>
  );
}

export default function App() {
  return (
    <div className="relative h-screen overflow-hidden bg-white font-['Open_Sans','Segoe_UI',sans-serif] text-[11px] text-[#444444]">
      <div className="flex h-full flex-col border-x border-b border-[#042f5a]">
        <div className="-mx-px"><TitleBar /></div>
        <Ribbon />
        <div className="flex min-h-0 flex-1">
          <Sidebar />
          <main className="flex min-w-0 flex-1 flex-col">
            <DocumentTabs />
            <div className="flex min-h-0 flex-1">
              <LevelNav />
              <div className="flex min-w-0 flex-1 flex-col pt-[9px] pl-[2px]">
                <div className="ml-1 flex h-[52px] w-[230px] shrink-0 flex-col gap-1 bg-[#0f85ff] px-[9px] pt-[3px] whitespace-nowrap text-white">
                  <div className="flex justify-between text-[12px] leading-[18px] font-semibold">
                    <span>Liegenschaft</span>
                    <span>10000</span>
                  </div>
                  <div className="leading-[18px]">Grundackerweg 10/12, 8912 Obfelden</div>
                </div>
                <div className="mt-[14px] flex h-[31px] shrink-0 border-b border-[#b4b4b4]">
                  <button className="h-8 w-[82px] shrink-0 border-b-[3px] border-[#0f85ff] font-bold">Stammdaten</button>
                  <div className="ml-[6px] flex gap-[14px] pb-px whitespace-nowrap">
                    {detailTabs.map((tab) => (
                      <button key={tab}>{tab}</button>
                    ))}
                  </div>
                </div>
                <div className="flex min-h-0 flex-1 gap-11 pt-[22px] pl-[21px]">
                  <Overview />
                  <Panels />
                </div>
              </div>
            </div>
          </main>
        </div>
      </div>
      <ReportDialog />
    </div>
  );
}
